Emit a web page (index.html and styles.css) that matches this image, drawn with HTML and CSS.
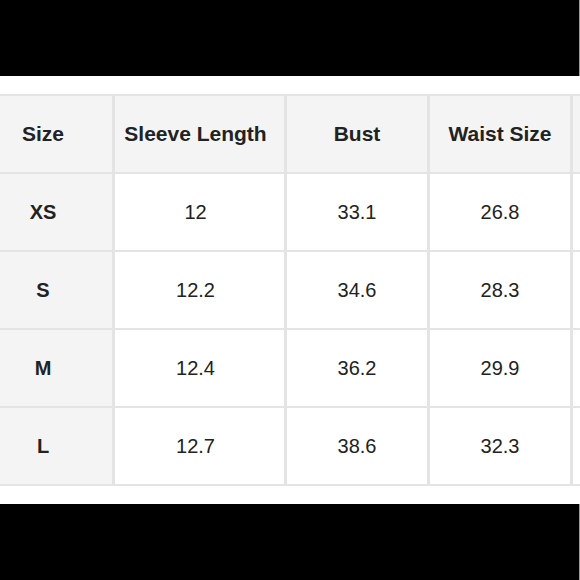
FILE: index.html
```html
<!DOCTYPE html>
<html>
<head>
<meta charset="utf-8">
<link rel="stylesheet" href="styles.css">
</head>
<body>
<div class="bar bar-top"></div>
<div class="wrap">
  <div class="table">
    <div class="cell head first">Size</div>
    <div class="cell head second">Sleeve Length</div>
    <div class="cell head">Bust</div>
    <div class="cell head">Waist Size</div>
    <div class="cell head"></div>

    <div class="cell side first">XS</div>
    <div class="cell second">12</div>
    <div class="cell">33.1</div>
    <div class="cell">26.8</div>
    <div class="cell"></div>

    <div class="cell side first">S</div>
    <div class="cell second">12.2</div>
    <div class="cell">34.6</div>
    <div class="cell">28.3</div>
    <div class="cell"></div>

    <div class="cell side first">M</div>
    <div class="cell second">12.4</div>
    <div class="cell">36.2</div>
    <div class="cell">29.9</div>
    <div class="cell"></div>

    <div class="cell side first">L</div>
    <div class="cell second">12.7</div>
    <div class="cell">38.6</div>
    <div class="cell">32.3</div>
    <div class="cell"></div>
  </div>
</div>
<div class="bar bar-bottom"></div>
</body>
</html>
```
FILE: styles.css
```css
html, body {
  margin: 0;
  padding: 0;
  background: #ffffff;
  width: 580px;
  height: 580px;
  overflow: hidden;
  font-family: "Liberation Sans", Arial, sans-serif;
}
.bar {
  background: #000000;
  width: 579px;
  border-right: 1px solid #9a9a9a;
}
.bar-top {
  height: 76px;
}
.bar-bottom {
  height: 77px;
}
.wrap {
  padding: 18px 0 18px 0;
  overflow: hidden;
  width: 580px;
}
.table {
  display: grid;
  grid-template-columns: 112px 169px 140px 140px 140px;
  grid-template-rows: repeat(5, 76px);
  gap: 2px 3px;
  padding: 2px 0;
  background: #e4e4e4;
  width: 720px;
}
.cell {
  background: #ffffff;
  display: flex;
  align-items: center;
  justify-content: center;
  font-size: 20px;
  color: #222222;
}
.first {
  padding-right: 26px;
}
.second {
  padding-right: 8px;
}
.head {
  background: #f4f4f4;
  font-weight: bold;
  font-size: 21px;
  padding-bottom: 1px;
}
.side {
  background: #f4f4f4;
  font-weight: bold;
  font-size: 20px;
}
```
